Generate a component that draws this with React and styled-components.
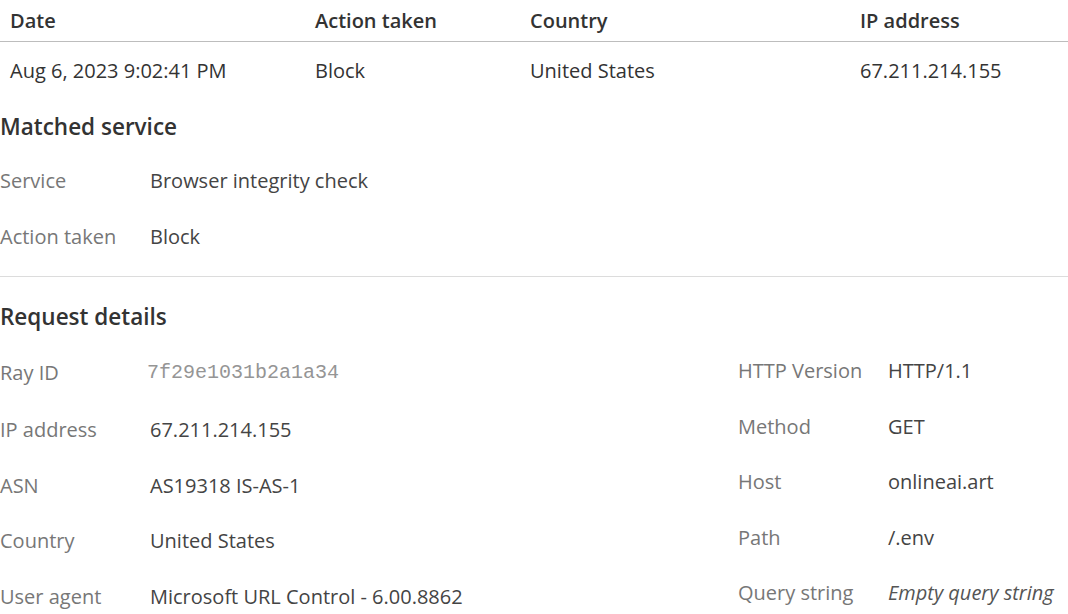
import React from 'react';
import styled, { createGlobalStyle } from 'styled-components';

const GlobalStyle = createGlobalStyle`
  html, body {
    margin: 0;
    padding: 0;
    background: #ffffff;
  }
  body {
    font-family: "Open Sans", "Noto Sans", sans-serif;
    color: #333;
  }
`;

const event = {
    date: 'Aug 6, 2023 9:02:41 PM',
    action: 'Block',
    country: 'United States',
    ip: '67.211.214.155',
};

const leftDetails = [
    { label: 'Ray ID', value: '7f29e1031b2a1a34', mono: true },
    { label: 'IP address', value: '67.211.214.155' },
    { label: 'ASN', value: 'AS19318 IS-AS-1' },
    { label: 'Country', value: 'United States' },
    { label: 'User agent', value: 'Microsoft URL Control - 6.00.8862' },
];

const rightDetails = [
    { label: 'HTTP Version', value: 'HTTP/1.1' },
    { label: 'Method', value: 'GET' },
    { label: 'Host', value: 'onlineai.art' },
    { label: 'Path', value: '/.env' },
    { label: 'Query string', value: 'Empty query string', empty: true },
];

const DetailList = ({ items }) => (
    <List>
        {items.map((item) => (
            <DetailRow key={item.label} $tall={item.mono}>
                <Label>{item.label}</Label>
                <Value $mono={item.mono} $empty={item.empty}>{item.value}</Value>
            </DetailRow>
        ))}
    </List>
);

const App = () => {
    return (
        <Page>
            <GlobalStyle />
            <Table>
                <HeadCell>Date</HeadCell>
                <HeadCell>Action taken</HeadCell>
                <HeadCell>Country</HeadCell>
                <HeadCell>IP address</HeadCell>
                <Cell>{event.date}</Cell>
                <Cell>{event.action}</Cell>
                <Cell>{event.country}</Cell>
                <Cell>{event.ip}</Cell>
            </Table>

            <Section>
                <Heading>Matched service</Heading>
                <List>
                    <DetailRow>
                        <Label>Service</Label>
                        <Value>Browser integrity check</Value>
                    </DetailRow>
                    <DetailRow>
                        <Label>Action taken</Label>
                        <Value>Block</Value>
                    </DetailRow>
                </List>
            </Section>

            <Divider />

            <Section $spaced>
                <Heading>Request details</Heading>
                <Columns>
                    <DetailList items={leftDetails} />
                    <DetailList items={rightDetails} />
                </Columns>
            </Section>
        </Page>
    );
};

const Page = styled.div`
  width: 1068px;
  height: 614px;
  overflow: hidden;
`;

const Table = styled.div`
  display: grid;
  grid-template-columns: 305px 215px 330px 1fr;
`;

const HeadCell = styled.div`
  height: 41px;
  display: flex;
  align-items: center;
  padding-left: 10px;
  border-bottom: 1px solid #bdbdbd;
  font-size: 20px;
  font-weight: 600;
  color: #333;
`;

const Cell = styled.div`
  height: 57px;
  display: flex;
  align-items: center;
  padding-left: 10px;
  font-size: 20px;
  color: #333;
`;

const Section = styled.section`
  display: flex;
  flex-direction: column;
  padding-top: ${(p) => (p.$spaced ? '12px' : '0')};
`;

const Heading = styled.h2`
  margin: 0;
  height: ${(p) => (p.$short ? '52px' : '54px')};
  display: flex;
  align-items: center;
  font-size: 22.5px;
  font-weight: 600;
  color: #333;
`;

const List = styled.div`
  display: flex;
  flex-direction: column;
`;

const DetailRow = styled.div`
  display: grid;
  grid-template-columns: 150px 1fr;
  align-items: center;
  height: ${(p) => (p.$tall ? '59px' : '55.5px')};
`;

const Label = styled.span`
  font-size: 20px;
  color: #777;
`;

const Value = styled.span`
  font-size: 20px;
  font-family: ${(p) => (p.$mono ? '"Liberation Mono", monospace' : 'inherit')};
  font-style: ${(p) => (p.$empty ? 'italic' : 'normal')};
  color: ${(p) => (p.$mono ? '#959595' : p.$empty ? '#555' : '#444')};
  margin-left: ${(p) => (p.$mono ? '-3px' : '0')};
`;

const Divider = styled.hr`
  margin: 12px 0 0;
  border: none;
  border-top: 1px solid #dcdcdc;
`;

const Columns = styled.div`
  display: grid;
  grid-template-columns: 738px 1fr;
`;

export default App;
